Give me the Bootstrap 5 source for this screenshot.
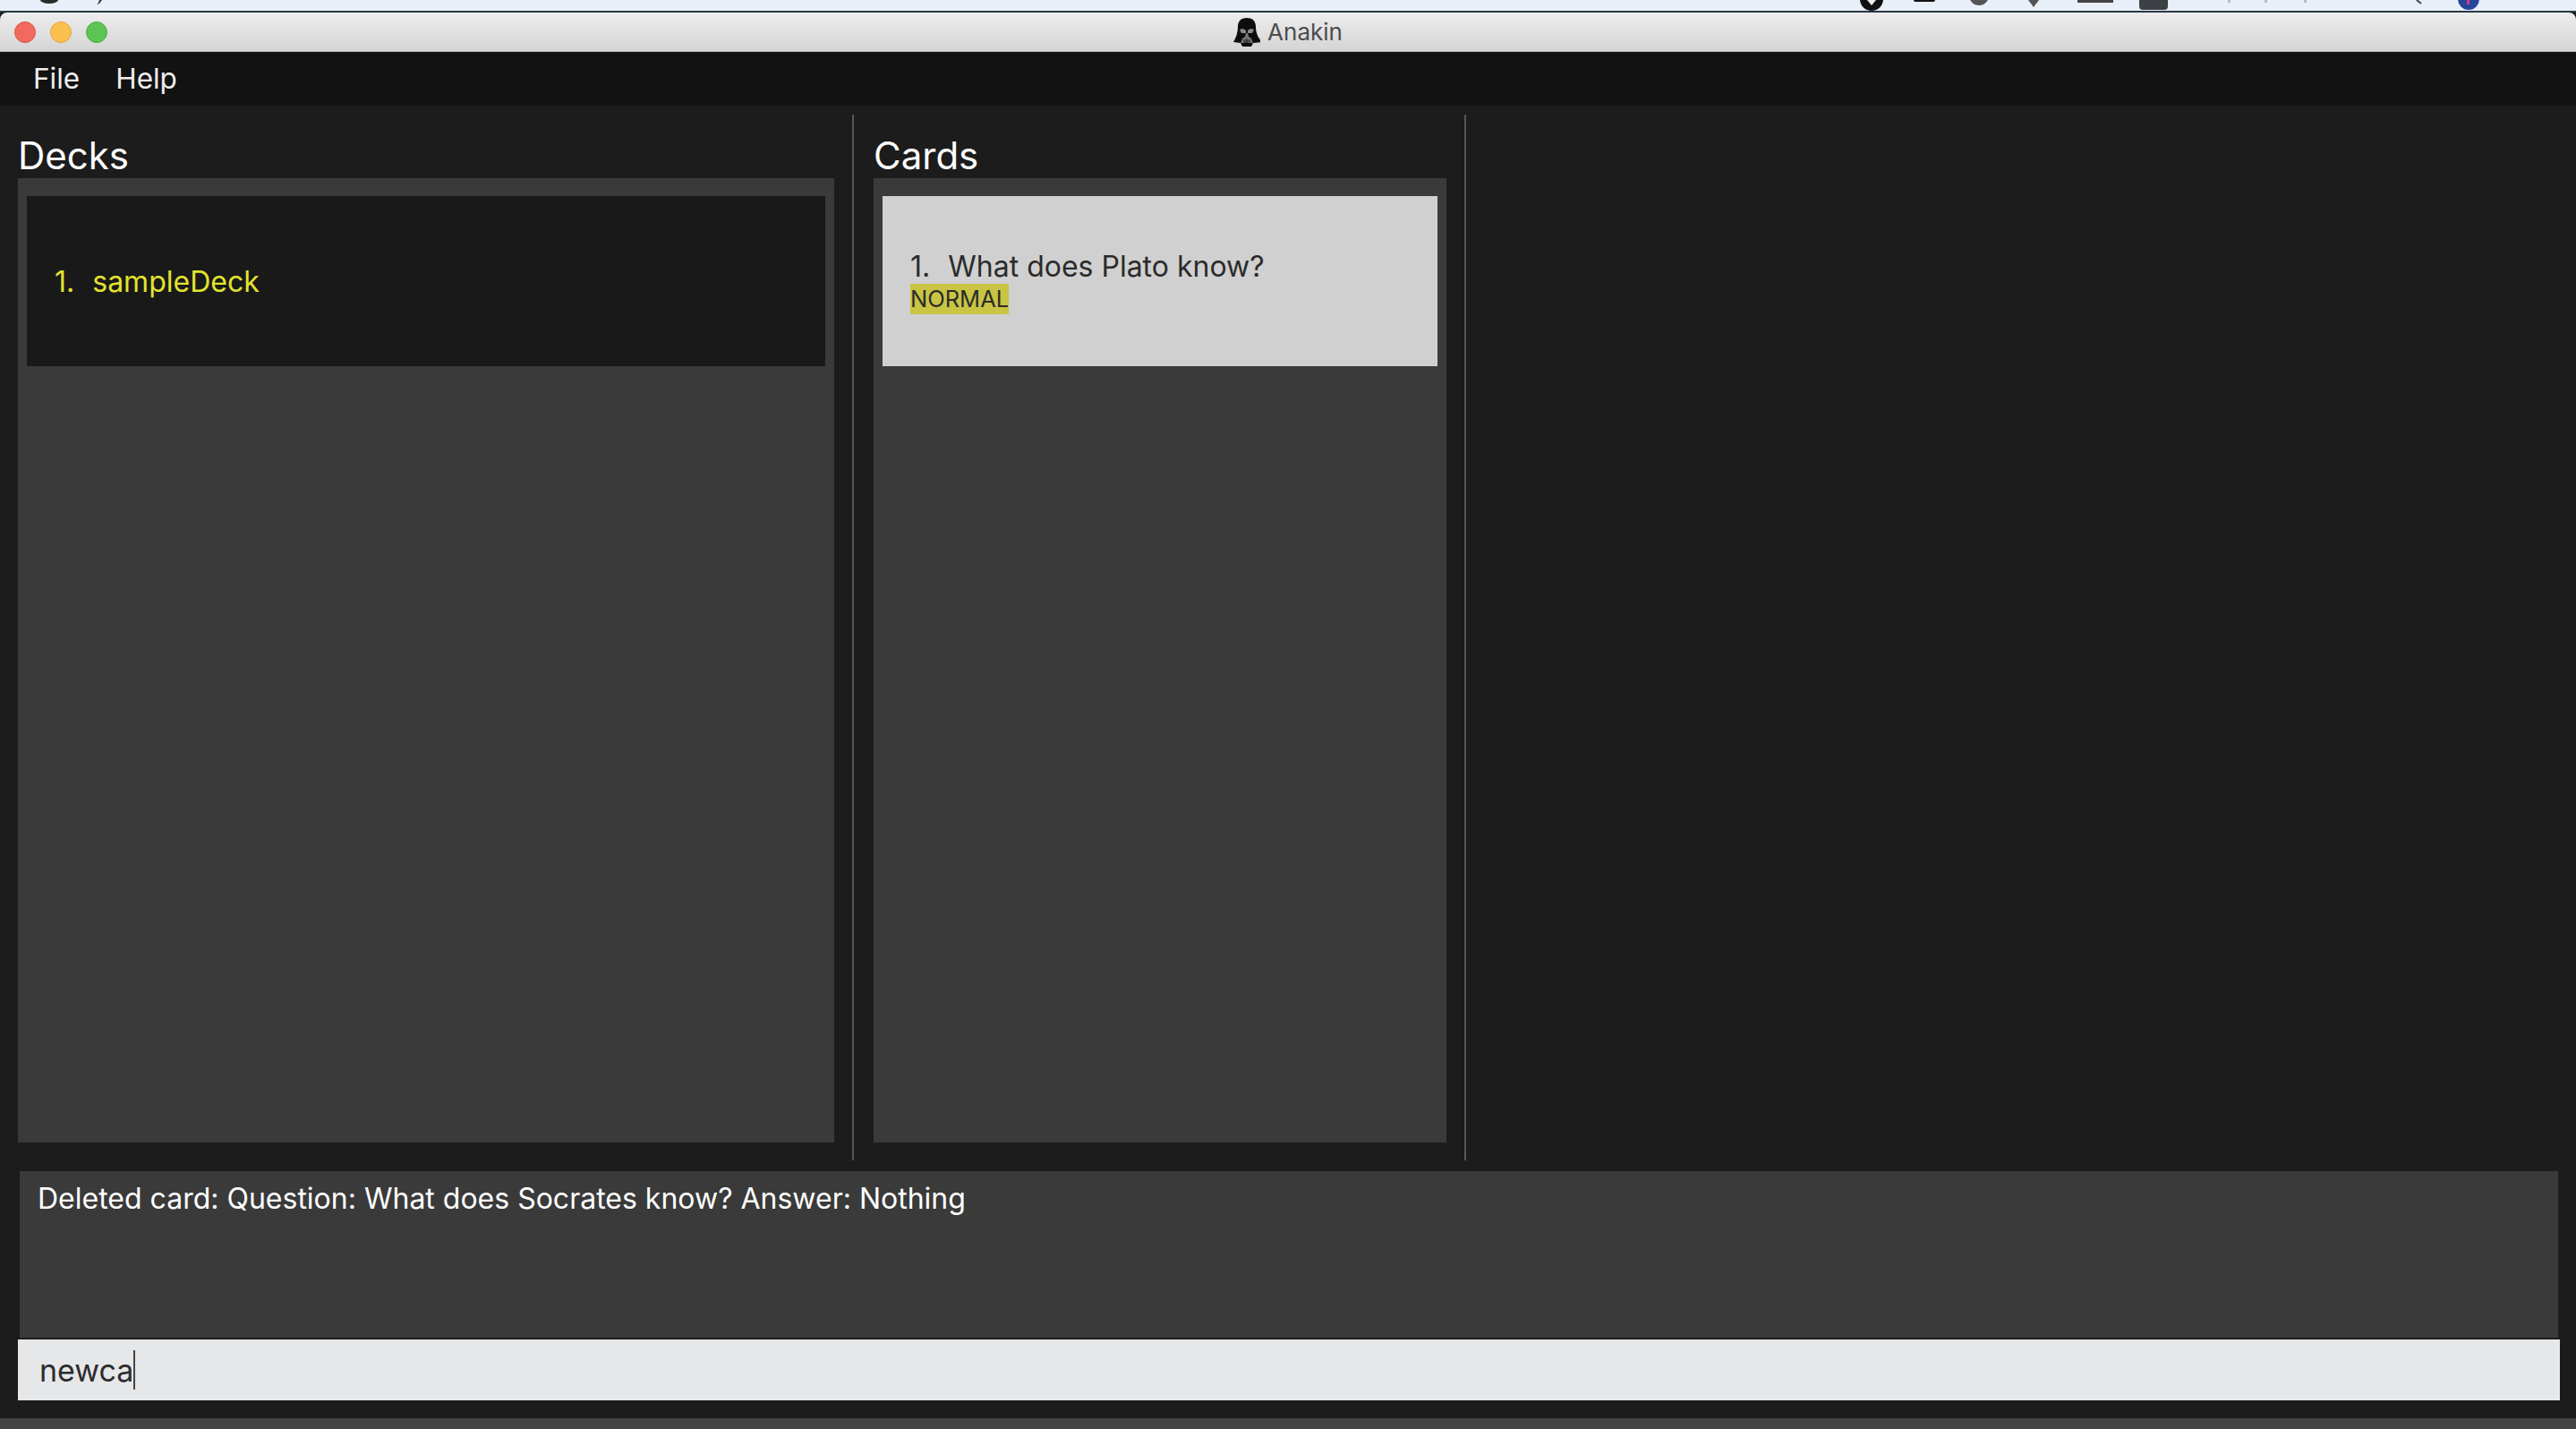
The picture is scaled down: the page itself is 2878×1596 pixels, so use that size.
<!DOCTYPE html>
<html lang="en">
<head>
  <meta charset="UTF-8" />
  <title>Anakin</title>
  <link href="https://cdn.jsdelivr.net/npm/bootstrap@5.3.0/dist/css/bootstrap.min.css" rel="stylesheet">
  <style>
    html, body { height: 100%; }
    body { background: #1c1c1c; font-family: Inter, "Liberation Sans", sans-serif; overflow: hidden; }
    .desk-strip { height: 12px; background: #e9eff8; flex: none; }
    .desk-strip svg { display: block; }
    .window-top { height: 2px; background: #2a3642; flex: none; }
    .title-bar { height: 44px; background: linear-gradient(#ededed, #d5d5d5); border-bottom: 1px solid #b9b9b9; border-radius: 8px 8px 0 0; flex: none; padding-left: 16px; }
    .light { width: 24px; height: 24px; border-radius: 50%; margin-right: 16px; }
    .light-red { background: #f1695f; border: 1px solid #dd5349; }
    .light-yellow { background: #fbc04f; border: 1px solid #e5a53a; }
    .light-green { background: #5cc453; border: 1px solid #4aaf42; }
    .title-box { font-size: 26px; color: #4c4c4c; }
    .menu-strip { height: 60px; background: #121212; flex: none; padding: 0 0 0 37px; }
    .menu-strip .nav-link { color: #eee; font-size: 31.500px; padding: 0; margin-right: 40px; line-height: 60px; }
    .top-area { height: 1178px; padding-top: 10px; flex: none; }
    .col-decks { width: 952px; padding: 0 20px 0 20px; flex: none; }
    .col-cards { width: 682px; padding: 0 20px 0 22px; flex: none; }
    .vline { width: 2px; background: #565656; flex: none; }
    .col-title { height: 71px; color: #fff; font-size: 42px; line-height: 1; padding-top: 25px; margin: 0; font-weight: 400; }
    .list-box { height: 1077px; background: #3a3a3a; padding: 20px 10px; }
    .list-box .list-group-item { height: 190px; border: 0; border-radius: 0; font-size: 32px; padding: 0 0 0 31px; }
    .list-box .deck-cell { background: #191919; color: #e3e32f; padding-top: 2px; }
    .list-box .card-cell { background: #d0d0d0; color: #2b2b2b; padding-bottom: 3px; }
    .row-num { margin-right: 20px; }
    .tag-normal { background: #c9c443; color: #2b2b2b; font-size: 25.500px; line-height: 34px; align-self: flex-start; margin-top: -5px; }
    .bottom-area { padding: 12px 18px 0 20px; flex: none; }
    .result-box { height: 186px; margin: 0 2px; background: #3a3a3a; color: #fff; font-size: 32px; padding: 7px 20px; }
    .cmd-box { height: 68px; margin-top: 2px; background: #e6e7e9; color: #2c2c2e; font-size: 34px; border: 0; border-radius: 0; padding: 0 0 0 24px; }
    .caret-bar { width: 2px; height: 44px; background: #444; }
    .foot-strip { height: 12px; background: #444; margin-top: 20px; flex: none; }
  </style>
</head>
<body class="d-flex flex-column">
  <div class="desk-strip">
    <svg width="2878" height="12" viewBox="0 0 2878 12">
      <ellipse cx="55" cy="0" rx="10" ry="4" fill="#2c2c2c"/>
      <path d="M108 5l3-1 3-4h-3l-1 3z" fill="#333"/>
      <circle cx="2091" cy="-1" r="13" fill="#111"/>
      <path d="M2086 0l5 6 5-6z" fill="#eee"/>
      <rect x="2138" y="-4" width="24" height="6" rx="2" fill="#111"/>
      <circle cx="2211" cy="-5" r="11" fill="#555"/>
      <path d="M2266 0h12l-6 8z" fill="#555"/>
      <rect x="2321" y="-4" width="40" height="7" fill="#444"/>
      <rect x="2390" y="-6" width="32" height="17" rx="4" fill="#3d4145"/>
      <rect x="2489" y="0" width="3" height="3" fill="#bbb"/>
      <rect x="2530" y="0" width="3" height="3" fill="#bbb"/>
      <rect x="2574" y="0" width="3" height="3" fill="#bbb"/>
      <path d="M2700 0l5 4" stroke="#444" stroke-width="2"/>
      <circle cx="2758" cy="-1" r="12" fill="#27459a"/>
      <rect x="2756" y="0" width="3" height="5" fill="#d23a8a"/>
    </svg>
  </div>
  <div class="window-top"></div>
  <div class="title-bar d-flex align-items-center position-relative">
    <span class="light light-red"></span>
    <span class="light light-yellow"></span>
    <span class="light light-green"></span>
    <div class="position-absolute top-0 start-0 w-100 h-100 d-flex align-items-center justify-content-center gap-2 title-box">
      <svg width="30" height="32" viewBox="0 0 30 32">
        <path d="M15 0C8 0 5 4 5 10 5 16 3 22 0 27l8 1 2 4h10l2-4 10-1C27 22 25 16 25 10 25 4 22 0 15 0z" fill="#0d0d0d"/>
        <path d="M7 13c2-1 5-1 7 1v3H9zM23 13c-2-1-5-1-7 1v3h5z" fill="#8a8a8a"/>
        <path d="M14 17h2l1 4 3 2 2 5H8l2-5 3-2z" fill="#777"/>
        <path d="M11 25h8M11 27h8M15 23v5" stroke="#222" stroke-width="1"/>
      </svg>
      <span>Anakin</span>
    </div>
  </div>
  <nav class="menu-strip nav">
    <a class="nav-link" href="#">File</a>
    <a class="nav-link" href="#">Help</a>
  </nav>
  <div class="top-area d-flex">
    <div class="col-decks">
      <h2 class="col-title">Decks</h2>
      <div class="list-box">
        <div class="list-group">
          <div class="list-group-item deck-cell d-flex align-items-center">
            <span class="row-num">1.</span><span>sampleDeck</span>
          </div>
        </div>
      </div>
    </div>
    <div class="vline"></div>
    <div class="col-cards">
      <h2 class="col-title">Cards</h2>
      <div class="list-box">
        <div class="list-group">
          <div class="list-group-item card-cell d-flex flex-column justify-content-center">
            <div><span class="row-num">1.</span><span>What does Plato know?</span></div>
            <span class="tag-normal">NORMAL</span>
          </div>
        </div>
      </div>
    </div>
    <div class="vline"></div>
  </div>
  <div class="bottom-area">
    <div class="result-box">Deleted card: Question: What does Socrates know? Answer: Nothing</div>
    <div class="cmd-box form-control d-flex align-items-center"><span>newca</span><span class="caret-bar"></span></div>
  </div>
  <div class="foot-strip"></div>
  <script src="https://cdn.jsdelivr.net/npm/bootstrap@5.3.0/dist/js/bootstrap.bundle.min.js"></script>
</body>
</html>
